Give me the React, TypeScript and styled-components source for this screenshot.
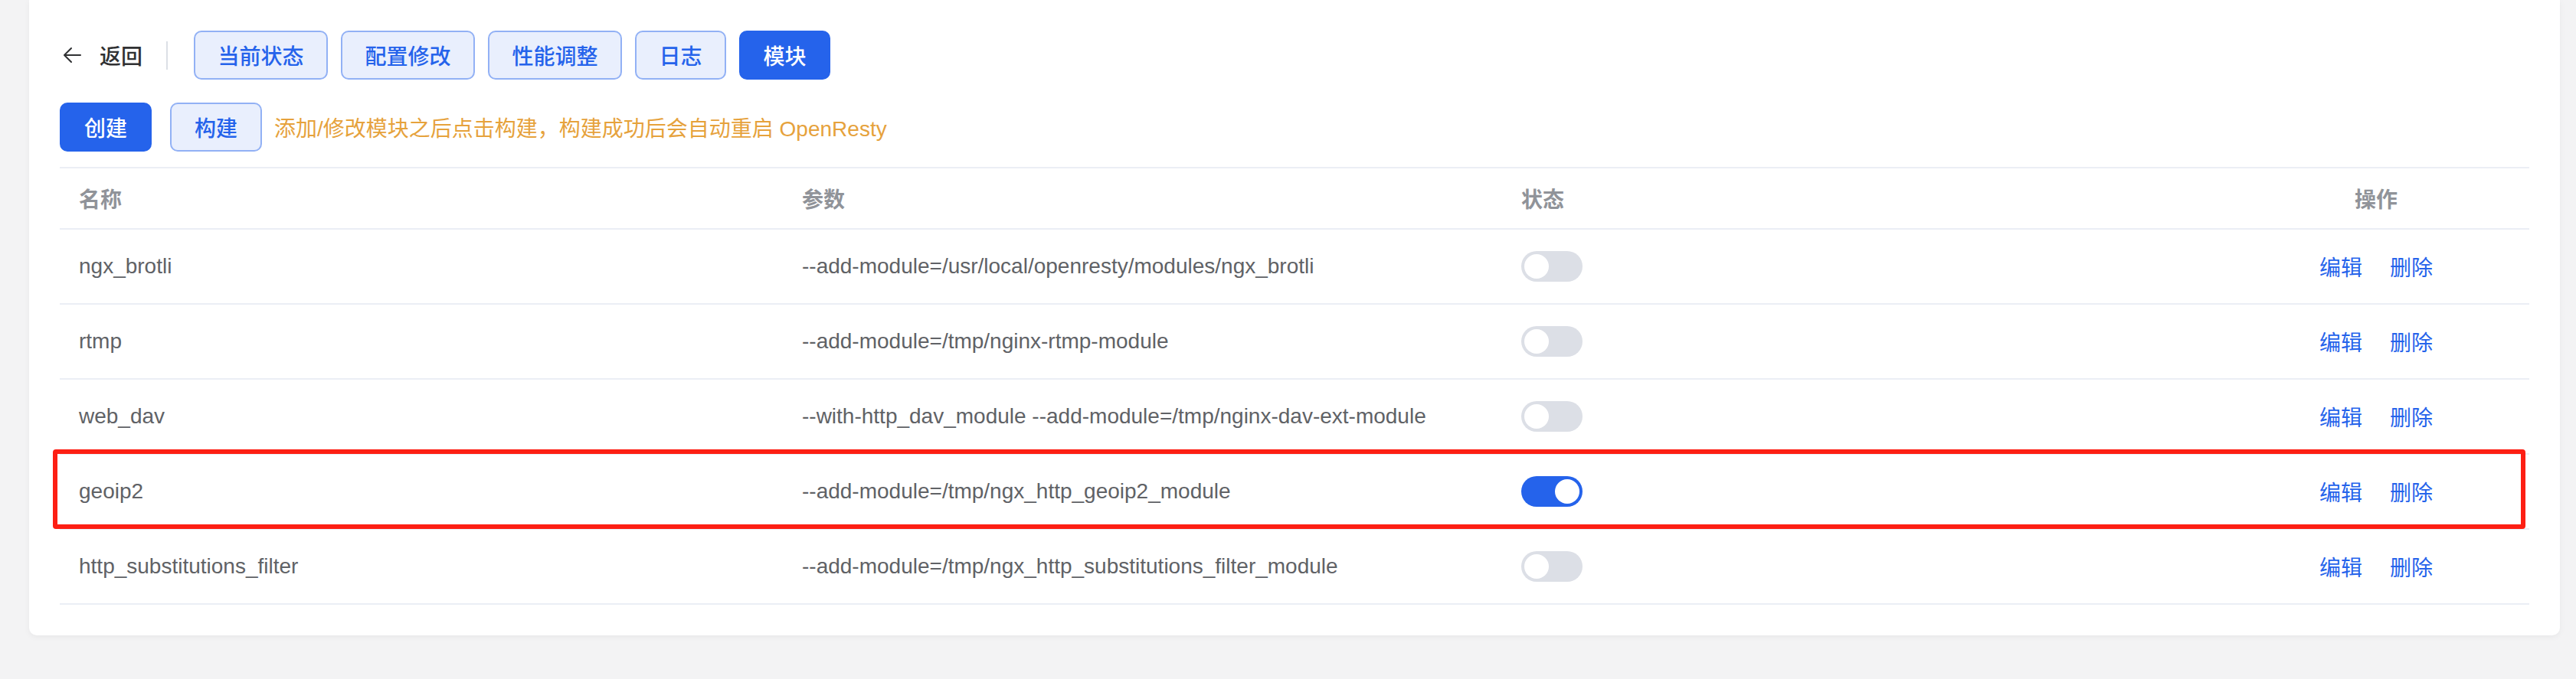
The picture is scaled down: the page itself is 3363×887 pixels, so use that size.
import React from "react";
import styled, { createGlobalStyle, css } from "styled-components";

const GlobalStyle = createGlobalStyle`
  html, body {
    margin: 0;
    padding: 0;
    background: #f3f3f4;
    font-family: "Liberation Sans", "Noto Sans CJK SC", sans-serif;
  }
  * { box-sizing: border-box; }
`;

const Page = styled.div`
  padding: 0 21px 57px 38px;
`;

const Card = styled.div`
  background: #ffffff;
  border-radius: 0 0 10px 10px;
  box-shadow: 0 2px 8px rgba(0, 0, 0, 0.05);
  padding: 40px 40px 40px 40px;
`;

const Toolbar = styled.div`
  display: flex;
  align-items: center;
  height: 64px;
`;

const BackIcon = styled.svg`
  width: 32px;
  height: 32px;
  color: #303133;
  flex: none;
`;

const BackText = styled.span`
  margin-left: 20px;
  font-size: 28px;
  font-weight: 500;
  color: #303133;
  font-family: "Noto Sans CJK SC", sans-serif;
`;

const VDivider = styled.span`
  width: 2px;
  height: 37px;
  background: #dcdfe6;
  margin: 0 34px 0 31px;
`;

const ButtonGroup = styled.div<{ $gap: number }>`
  display: flex;
  align-items: center;
  gap: ${(p) => p.$gap}px;
`;

const Button = styled.button<{ $primary?: boolean; $pad?: number }>`
  height: 64px;
  padding: 0 ${(p) => p.$pad ?? 29.5}px;
  border-radius: 10px;
  font-size: 28px;
  font-weight: 500;
  font-family: "Noto Sans CJK SC", sans-serif;
  cursor: pointer;
  border: 2px solid #92b1f5;
  background: #e9effd;
  color: #2563eb;
  ${(p) =>
    p.$primary &&
    css`
      border-color: #2563eb;
      background: #2563eb;
      color: #ffffff;
    `}
`;

const ActionRow = styled.div`
  display: flex;
  align-items: center;
  margin-top: 30px;
  height: 64px;
`;

const Hint = styled.span`
  margin-left: 16px;
  font-size: 28px;
  color: #e6a23c;
`;

const Table = styled.div`
  margin-top: 20px;
  border-top: 2px solid #ebeef5;
`;

const Row = styled.div<{ $header?: boolean; $marked?: boolean }>`
  position: relative;
  display: grid;
  grid-template-columns: 944px 939px 941px 1fr;
  align-items: center;
  height: ${(p) => (p.$header ? 80 : 98)}px;
  border-bottom: 2px solid #ebeef5;
  ${(p) =>
    p.$marked &&
    css`
      &::after {
        content: "";
        position: absolute;
        top: -7px;
        left: -9px;
        right: 5px;
        bottom: -1px;
        border: 6px solid #fd1f14;
        border-radius: 4px;
        pointer-events: none;
      }
    `}
`;

const Cell = styled.div<{ $center?: boolean }>`
  padding: 0 25px;
  font-size: 28px;
  color: #606266;
  white-space: nowrap;
  ${(p) =>
    p.$center &&
    css`
      display: flex;
      justify-content: center;
      gap: 36px;
      padding: 0;
    `}
`;

const HeadCell = styled(Cell)`
  color: #909399;
  font-weight: 700;
  font-family: "Noto Sans CJK SC", sans-serif;
`;

const Switch = styled.span<{ $on: boolean }>`
  display: flex;
  align-items: center;
  justify-content: ${(p) => (p.$on ? "flex-end" : "flex-start")};
  width: 80px;
  height: 40px;
  padding: 4px;
  border-radius: 20px;
  background: ${(p) => (p.$on ? "#2563eb" : "#dcdfe6")};
`;

const Knob = styled.span`
  width: 32px;
  height: 32px;
  border-radius: 50%;
  background: #ffffff;
`;

const LinkButton = styled.span`
  font-size: 28px;
  color: #2563eb;
  font-family: "Noto Sans CJK SC", sans-serif;
  cursor: pointer;
`;

const modules = [
  { name: "ngx_brotli", args: "--add-module=/usr/local/openresty/modules/ngx_brotli", on: false },
  { name: "rtmp", args: "--add-module=/tmp/nginx-rtmp-module", on: false },
  { name: "web_dav", args: "--with-http_dav_module --add-module=/tmp/nginx-dav-ext-module", on: false },
  { name: "geoip2", args: "--add-module=/tmp/ngx_http_geoip2_module", on: true, marked: true },
  { name: "http_substitutions_filter", args: "--add-module=/tmp/ngx_http_substitutions_filter_module", on: false },
];

const tabs = ["当前状态", "配置修改", "性能调整", "日志", "模块"];

export default function App() {
  return (
    <Page>
      <GlobalStyle />
      <Card>
        <Toolbar>
          <BackIcon viewBox="0 0 1024 1024">
            <path fill="currentColor" d="M224 480h640a32 32 0 1 1 0 64H224a32 32 0 0 1 0-64z" />
            <path
              fill="currentColor"
              d="m237.248 512 265.408 265.344a32 32 0 0 1-45.312 45.312l-288-288a32 32 0 0 1 0-45.312l288-288a32 32 0 1 1 45.312 45.312L237.248 512z"
            />
          </BackIcon>
          <BackText>返回</BackText>
          <VDivider />
          <ButtonGroup $gap={17}>
            {tabs.map((t) => (
              <Button key={t} $primary={t === "模块"}>
                {t}
              </Button>
            ))}
          </ButtonGroup>
        </Toolbar>
        <ActionRow>
          <ButtonGroup $gap={24}>
            <Button $primary $pad={30}>创建</Button>
            <Button $pad={30}>构建</Button>
          </ButtonGroup>
          <Hint>添加/修改模块之后点击构建，构建成功后会自动重启 OpenResty</Hint>
        </ActionRow>
        <Table>
          <Row $header>
            <HeadCell>名称</HeadCell>
            <HeadCell>参数</HeadCell>
            <HeadCell>状态</HeadCell>
            <HeadCell $center>操作</HeadCell>
          </Row>
          {modules.map((m) => (
            <Row key={m.name} $marked={m.marked}>
              <Cell>{m.name}</Cell>
              <Cell>{m.args}</Cell>
              <Cell>
                <Switch $on={m.on}>
                  <Knob />
                </Switch>
              </Cell>
              <Cell $center>
                <LinkButton>编辑</LinkButton>
                <LinkButton>删除</LinkButton>
              </Cell>
            </Row>
          ))}
        </Table>
      </Card>
    </Page>
  );
}
